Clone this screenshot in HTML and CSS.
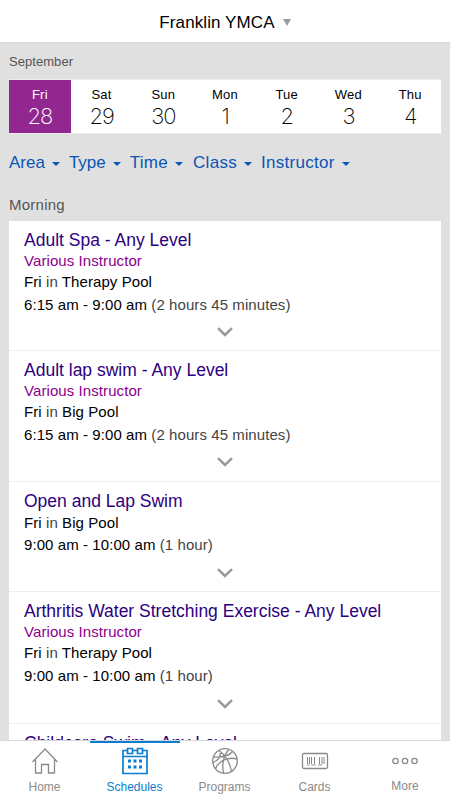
FILE: index.html
```html
<!DOCTYPE html>
<html lang="en">
<head>
<meta charset="utf-8">
<meta name="viewport" content="width=device-width, initial-scale=1">
<title>Schedules</title>
<link rel="stylesheet" href="styles.css">
</head>
<body>
<div class="app">
  <header class="topbar"><span class="location">Franklin YMCA</span><svg class="location-arrow" viewBox="0 0 8 7"><path d="M0 0h8L4 7z"/></svg></header>
  <main class="content">
    <h2 class="month">September</h2>
    <div class="days">
      <div class="day selected"><span class="dow">Fri</span><span class="num">28</span></div>
      <div class="day"><span class="dow">Sat</span><span class="num">29</span></div>
      <div class="day"><span class="dow">Sun</span><span class="num">30</span></div>
      <div class="day"><span class="dow">Mon</span><span class="num">1</span></div>
      <div class="day"><span class="dow">Tue</span><span class="num">2</span></div>
      <div class="day"><span class="dow">Wed</span><span class="num">3</span></div>
      <div class="day"><span class="dow">Thu</span><span class="num">4</span></div>
    </div>
    <nav class="filters">
      <span class="filter">Area</span>
      <span class="filter">Type</span>
      <span class="filter">Time</span>
      <span class="filter">Class</span>
      <span class="filter">Instructor</span>
    </nav>
    <h2 class="period">Morning</h2>
    <section class="list">
      <article class="item">
        <h3>Adult Spa - Any Level</h3>
        <p class="who">Various Instructor</p>
        <p class="where">Fri <i>in</i> Therapy Pool</p>
        <p class="when">6:15 am - 9:00 am <i>(2 hours 45 minutes)</i></p>
        <svg class="chevron" viewBox="0 0 16 10"><path d="M1 1.200 8 8l7-6.800"/></svg>
      </article>
      <article class="item">
        <h3>Adult lap swim - Any Level</h3>
        <p class="who">Various Instructor</p>
        <p class="where">Fri <i>in</i> Big Pool</p>
        <p class="when">6:15 am - 9:00 am <i>(2 hours 45 minutes)</i></p>
        <svg class="chevron" viewBox="0 0 16 10"><path d="M1 1.200 8 8l7-6.800"/></svg>
      </article>
      <article class="item short">
        <h3>Open and Lap Swim</h3>
        <p class="where">Fri <i>in</i> Big Pool</p>
        <p class="when">9:00 am - 10:00 am <i>(1 hour)</i></p>
        <svg class="chevron" viewBox="0 0 16 10"><path d="M1 1.200 8 8l7-6.800"/></svg>
      </article>
      <article class="item">
        <h3>Arthritis Water Stretching Exercise - Any Level</h3>
        <p class="who">Various Instructor</p>
        <p class="where">Fri <i>in</i> Therapy Pool</p>
        <p class="when">9:00 am - 10:00 am <i>(1 hour)</i></p>
        <svg class="chevron" viewBox="0 0 16 10"><path d="M1 1.200 8 8l7-6.800"/></svg>
      </article>
      <article class="item">
        <h3>Childcare Swim - Any Level</h3>
      </article>
    </section>
  </main>
  <nav class="tabs">
    <div class="tab"><svg viewBox="0 0 28 28"><path d="M1.500 15 14 2l12.500 13M4.500 12.500V26h6v-8.500h7V26h6V12.500"/></svg><span>Home</span></div>
    <div class="tab active"><svg viewBox="0 0 28 28"><g stroke-width="1.700"><path d="M6.500 3.500H2v23h24v-23h-4.500M11.500 3.500h5M2 9.500h24"/><path d="M6.500 1.500h5v5h-5zM16.500 1.500h5v5h-5z"/></g><path class="dots" d="M7 12.500h3v3H7zM12.500 12.500h3v3h-3zM18 12.500h3v3h-3zM7 18.500h3v3H7zM12.500 18.500h3v3h-3zM18 18.500h3v3h-3z"/></svg><span>Schedules</span></div>
    <div class="tab"><svg viewBox="0 0 28 28"><circle cx="14" cy="14" r="12.300"/><path d="M8 3.500C14 8 19 16 20.500 24.500M2.500 10C11 10.500 18 9 21.500 4.500M4.500 21.500C8 13.500 17 9.500 26 12M12.500 26C10.500 17 13 8 17.500 2.500M2 15.500c5-1.500 7.500-6 7.500-11"/></svg><span>Programs</span></div>
    <div class="tab"><svg viewBox="0 0 28 28"><rect x="1.500" y="6.500" width="25" height="15" rx="1.500"/><path d="M6.500 10v7M8.500 10v7M10.500 10v7M13.500 10v7M18.500 10v7M21 10v7M23 10v7M6 18h2.500M10.500 18h4M17 18h4" stroke-width="1"/></svg><span>Cards</span></div>
    <div class="tab more"><svg viewBox="0 0 28 28"><circle cx="4.500" cy="14" r="2.700"/><circle cx="14" cy="14" r="2.700"/><circle cx="23.500" cy="14" r="2.700"/></svg><span>More</span></div>
  </nav>
</div>
</body>
</html>
```
FILE: styles.css
```css
* { box-sizing: border-box; }
body { margin: 0; font-family: "Liberation Sans", Arial, sans-serif; color: #000; background: #e0e0e0; }
h2, h3, p { margin: 0; font-weight: 400; }
i { font-style: normal; color: #444; }
.app { height: 800px; display: flex; flex-direction: column; overflow: hidden; }
.topbar { height: 43px; flex: none; background: #fff; border-bottom: 1px solid #d8d8d8; display: flex; align-items: center; justify-content: center; gap: 8px; padding-top: 3px; font-size: 17px; letter-spacing: .1px; }
.location-arrow { width: 8px; height: 7px; fill: #999; }
.content { flex: 1; min-height: 0; overflow: hidden; padding: 0 9px; background: #e0e0e0; }
.month { font-size: 13px; line-height: 16px; color: #555; padding-top: 11px; height: 36px; letter-spacing: .05px; }
.days { height: 55px; display: grid; grid-template-columns: repeat(7, 1fr); background: #fff; border: solid #eee; border-width: 1px 0; }
.day { display: flex; flex-direction: column; align-items: center; padding-top: 7px; }
.dow { font-size: 13px; line-height: 16px; letter-spacing: .2px; }
.num { font-family: Inter, sans-serif; font-weight: 200; font-size: 22px; line-height: 26px; letter-spacing: -1.2px; }
.selected { background: #92278f; color: #fff; }
.filters { height: 58px; padding-top: 18px; display: flex; align-items: flex-start; font-size: 17px; line-height: 21px; color: #0b55b5; }
.filter { display: flex; align-items: center; gap: 7px; margin-right: 9px; }
.filter:nth-child(n+3) { letter-spacing: .28px; }
.filter:nth-child(3) { margin-right: 10px; }
.filter::after { content: ""; border: 4px solid transparent; border-top-color: #0b55b5; border-bottom: 0; margin-top: 3px; }
.period { font-size: 15px; line-height: 20px; height: 28.5px; padding-top: 2.5px; color: #555; letter-spacing: .25px; }
.list { background: #fff; }
.item { height: 130.5px; padding: 8px 15px 0; border-bottom: 1px solid #eee; font-size: 15px; letter-spacing: .08px; }
.short { height: 110.5px; }
.item h3 { font-size: 17.5px; line-height: 22px; letter-spacing: 0; color: #2d0080; white-space: nowrap; }
.who { color: #8b008b; line-height: 20px; }
.where { line-height: 22px; }
.when { line-height: 24px; }
.short .where { line-height: 21px; }
.chevron { display: block; width: 16px; height: 10px; margin: 10px auto 0; fill: none; stroke: #999; stroke-width: 2.5; }
.short .chevron { margin-top: 11px; }
.short + .item { height: 131.5px; }
.short + .item .chevron { margin-top: 11px; }
.tabs { height: 60px; flex: none; display: grid; grid-template-columns: repeat(5, 1fr); background: #fff; border-top: 1px solid #d8d8d8; }
.tab { display: flex; flex-direction: column; align-items: center; color: #8a8a8a; font-size: 12px; line-height: 16px; padding: 6px 1px 0 0; }
.tab svg { width: 28px; height: 28px; fill: none; stroke: currentColor; stroke-width: 1.3; margin-bottom: 4px; }
.active { color: #0a7fd0; box-shadow: inset 0 2px #0a7fd0; }
.tab .dots { fill: currentColor; stroke: none; }
.more { padding-right: 0; }
.more svg { margin-bottom: 3px; }
```
